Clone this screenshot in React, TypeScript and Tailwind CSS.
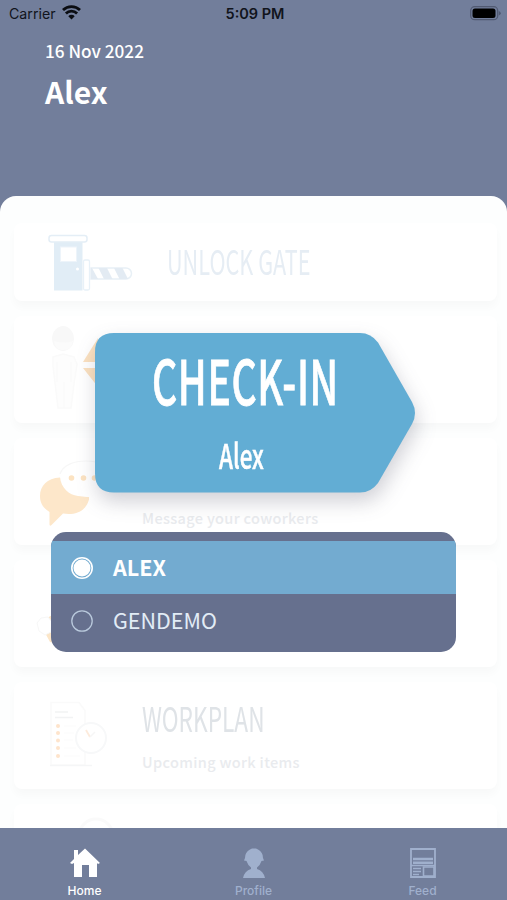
import type { ReactNode } from 'react';
import clsx from 'clsx';

type Card = {
  id: string;
  title?: string;
  subtitle?: string;
  icon: ReactNode;
};

function GateIcon() {
  return (
    <svg width="153" height="78" viewBox="0 0 153 78" fill="none" className="shrink-0">
      <rect x="40" y="17" width="28.5" height="50.5" fill="#e1edf6" />
      <rect x="35" y="12.5" width="38" height="6.5" rx="2.5" fill="#fff" stroke="#e4eef6" strokeWidth="1.5" />
      <rect x="46.500" y="24" width="16" height="14.500" fill="#fff" stroke="#edf4fa" />
      <rect x="69.500" y="37" width="6" height="30" rx="1.500" fill="#fff" stroke="#e8f1f8" strokeWidth="1.300" />
      <circle cx="63.500" cy="46" r="1.500" fill="#fff" />
      <path d="M77 45h35a5 5 0 0 1 0 11H77Z" fill="#fff" stroke="#e8f0f6" strokeWidth="1.500" />
      <path d="M77 45h1l6 11h-7ZM84.500 45H93l5.500 11H90ZM100 45h8.500l5.500 11h-8.500Z" fill="#e3ebf3" />
    </svg>
  );
}

function MentorIcon() {
  return (
    <svg width="128" height="107" viewBox="0 0 128 107" fill="none" className="shrink-0">
      <path d="M38 23c0-8 6-13 11-13 6 0 11 6 11 13l-1 5c-2 4-6 7-10 7s-8-3-10-7Z" fill="#f8f8f8" />
      <path d="M40 25q9 3 19 0-1 9-10 9-8 0-9-9Z" fill="#fbfbfb" />
      <path d="M39 41l10-3 11 3 3 7-3 20-3 24H44l-3-25-2-17Z" stroke="#fafafa" strokeWidth="1.500" fill="#fdfdfd" />
      <path d="M50 66v26M43 46v20M57 46v20" stroke="#fafafa" strokeWidth="1.500" />
      <path d="M84 22v24H69ZM69 52h15v19Z" fill="#fbe1c0" />
    </svg>
  );
}

function ChatIcon() {
  return (
    <svg width="128" height="107" viewBox="0 0 128 107" fill="none" className="shrink-0">
      <path
        d="M46 39.500C33 40 26 48 26 58c0 7 3 12 9.500 16v12c0 2 1 2 2 1L49 75.500c12 2 23-2 26-14V55L50 40Z"
        fill="#fde7ca"
      />
      <path d="M46 39c0-10 12-16 26-16 15 0 25 8 25 18S87 59 73 59l-9-1c-9-1-17-8-18-19Z" fill="#fff" />
      <path d="M46 36c3-9 14-13 26-13 6 0 12 1 16 4" stroke="#f7f7f7" strokeWidth="1.200" />
      <g fill="#fce3c2">
        <circle cx="57.500" cy="40" r="2.800" />
        <circle cx="69.500" cy="40" r="2.800" />
        <circle cx="80.500" cy="40" r="2.800" />
      </g>
    </svg>
  );
}

function TeamIcon() {
  return (
    <svg width="128" height="107" viewBox="0 0 128 107" fill="none" className="shrink-0">
      <path d="M40 54l-7 4v6l7 2ZM30 71l7 1 3 3v8l-4-1Z" fill="#fce6c8" />
      <path d="M34 57l-7 1-4 5 2 8 6 4 6-3 1-10Z" fill="#fff" stroke="#f7f7f7" />
    </svg>
  );
}

function WorkplanIcon() {
  return (
    <svg width="128" height="107" viewBox="0 0 128 107" fill="none" className="shrink-0">
      <path d="M37 20.500h28l6 8V83H37Z" stroke="#fafafa" strokeWidth="1.500" />
      <path d="M41 30h13M41 35.500h18" stroke="#f2f3f4" strokeWidth="1.500" />
      <path d="M50 44h12M50 51h10M50 58h9M50 66h12M50 74h16" stroke="#fbfbfb" />
      <path d="M36 83.500h42" stroke="#f5f6f7" strokeWidth="1.500" />
      <g fill="#fee4cc">
        <circle cx="44" cy="44" r="2" />
        <circle cx="44" cy="51" r="2" />
        <circle cx="44" cy="58.500" r="2" />
        <circle cx="44" cy="66" r="2" />
        <circle cx="44" cy="74" r="2" />
      </g>
      <circle cx="77" cy="56" r="15" fill="#fff" stroke="#f7f8f9" strokeWidth="2" />
      <path d="M72 48l4 7" stroke="#fdebdc" strokeWidth="1.800" />
      <path d="M76 55l5-5" stroke="#f6f6f6" strokeWidth="1.500" />
    </svg>
  );
}

function NextIcon() {
  return (
    <svg width="128" height="107" viewBox="0 0 128 107" fill="none" className="shrink-0">
      <circle cx="82" cy="32" r="17" stroke="#fafafa" strokeWidth="3" />
    </svg>
  );
}

const cards: Card[] = [
  { id: 'mentor', icon: <MentorIcon /> },
  { id: 'chat', subtitle: 'Message your coworkers', icon: <ChatIcon /> },
  { id: 'team', icon: <TeamIcon /> },
  { id: 'workplan', title: 'WORKPLAN', subtitle: 'Upcoming work items', icon: <WorkplanIcon /> },
  { id: 'next', icon: <NextIcon /> },
];

const sites = [
  { name: 'ALEX', selected: true },
  { name: 'GENDEMO', selected: false },
];

function StatusBar() {
  return (
    <div className="flex h-7 items-center pl-[9px] pr-1.5 font-['Inter',sans-serif] text-sm text-[#11141c]">
      <div className="flex flex-1 items-center gap-1.5">
        <span className="text-[14.200px]">Carrier</span>
        <svg width="19" height="15" viewBox="0 0 19 15" className="-mt-1" fill="#0b0d12">
          <path d="M9.500 14.500 6.300 11.200a4.500 4.500 0 0 1 6.400 0Z" />
          <path d="M3.900 8.500a8 8 0 0 1 11.200 0" fill="none" stroke="#0b0d12" strokeWidth="2.800" />
          <path d="M1 5a12.200 12.200 0 0 1 17 0" fill="none" stroke="#0b0d12" strokeWidth="2.800" />
        </svg>
      </div>
      <span className="text-[14.500px] font-semibold">5:09 PM</span>
      <div className="flex flex-1 items-center justify-end">
        <svg width="31" height="15" viewBox="0 0 31 15" className="-mt-0.5">
          <rect x="0.700" y="0.700" width="27" height="13" rx="4" fill="none" stroke="#515a72" strokeWidth="1.300" />
          <rect x="2.500" y="2.500" width="23" height="9.500" rx="2.500" fill="#000" />
          <path d="M28.800 5v4.500q2-.8 2-2.200T28.800 5" fill="#515a72" />
        </svg>
      </div>
    </div>
  );
}

function ActionCard({ card }: { card: Card }) {
  return (
    <div className="flex h-[107px] shrink-0 rounded-lg bg-white shadow-[0_6px_8px_rgba(0,0,0,0.025)]">
      {card.icon}
      <div className="flex flex-col whitespace-nowrap">
        <div className="flex h-[68px] items-center pt-[3px]">
          <span className="origin-left scale-x-[0.667] text-[34px] font-normal leading-10 text-[#dfe3e7]">
            {card.title}
          </span>
        </div>
        <span className="text-[14.500px] font-medium leading-6 tracking-[0.350px] text-[#e9ebee]">{card.subtitle}</span>
      </div>
    </div>
  );
}

function CheckInButton() {
  return (
    <div className="relative h-[160px] w-[320px]">
      <svg
        width="320"
        height="160"
        viewBox="0 0 320 160"
        className="absolute inset-0 overflow-visible drop-shadow-[2px_9px_10px_rgba(60,60,85,0.240)]"
      >
        <path
          d="M19 0H265Q276 0 283 9.500L317 69Q323 80 317 91L283 150Q276 159.500 265 159.500H19Q0 159.500 0 140.500V19Q0 0 19 0Z"
          fill="#62add4"
        />
      </svg>
      <div className="relative flex flex-col items-start whitespace-nowrap text-white">
        <span className="ml-[57px] mt-[4px] h-[93px] origin-left scale-x-[0.640] text-[61px] font-medium leading-[84px] tracking-[1px] [-webkit-text-stroke:0.800px_white]">
          CHECK-IN
        </span>
        <span className="ml-[124px] origin-left scale-x-[0.660] text-[34px] font-medium leading-[50px] [-webkit-text-stroke:0.500px_white]">
          Alex
        </span>
      </div>
    </div>
  );
}

function SitePicker() {
  return (
    <div className="flex h-[120px] w-[405px] flex-col overflow-hidden rounded-[15px] bg-[#66708e] pt-[9px]">
      {sites.map((site) => (
        <div
          key={site.name}
          className={clsx('flex h-[53px] items-center gap-5 pl-5', site.selected && 'bg-[#73abd0]')}
        >
          <svg width="22" height="22" viewBox="0 0 22 22" fill="none">
            <circle
              cx="11"
              cy="11"
              r="10.200"
              stroke={site.selected ? '#fff' : '#b9c9dc'}
              strokeWidth={site.selected ? 1.6 : 1.3}
            />
            {site.selected && <circle cx="11" cy="11" r="8.500" fill="#fff" />}
          </svg>
          <span
            className={clsx(
              '-mt-px text-[21.500px] leading-8',
              site.selected ? 'font-bold text-white' : 'font-normal text-[#e2ecf6]',
            )}
          >
            {site.name}
          </span>
        </div>
      ))}
    </div>
  );
}

function TabBar() {
  return (
    <nav className="grid h-[72px] shrink-0 grid-cols-3 bg-[#727e9b] font-['Inter',sans-serif] text-[12px] font-medium leading-4">
      <div className="flex flex-col items-center pt-[19px] text-white">
        <svg width="30" height="32" viewBox="0 0 30 32" fill="currentColor">
          <path d="M4 3h4v5l7-6.500L30 16l-2 1-1-1v14h-8V18h-7v12H4V16l-2 1-2-1 4-4Z" />
        </svg>
        <span className="mt-[4px]">Home</span>
      </div>
      <div className="flex flex-col items-center pt-[19px] text-[#a0b0cd]">
        <svg width="24" height="32" viewBox="0 0 24 32" fill="currentColor">
          <path d="M3 11q0-6 5-8.500l2-1h4l2 1q5 2.500 5 8.500l1 2.500-2.500.5q-1.500 4.500-4.500 6.500v1.500q6.500 2 8 9H1q1.500-7 8-9v-1.500q-3-2-4.500-6.500L2 13.500Z" />
        </svg>
        <span className="mt-[4px]">Profile</span>
      </div>
      <div className="flex flex-col items-center pt-[19px] text-[#a0b0cd]">
        <svg width="26" height="32" viewBox="0 0 26 32" fill="none" stroke="currentColor" strokeWidth="1.800">
          <path d="M1 2h24v28H1Z" />
          <path d="M3 12h20M3 15.800h20" strokeWidth="2.400" />
          <path d="M1 18.500h24M3 21.500h8M3 24.500h8M3 27.500h6" strokeWidth="1.400" />
          <path d="M13.500 20h10.500v9H13.500Z" strokeWidth="1.600" />
        </svg>
        <span className="mt-[4px]">Feed</span>
      </div>
    </nav>
  );
}

export default function App() {
  return (
    <div className="relative flex h-[900px] w-[507px] flex-col overflow-hidden bg-[#727e9b] font-['Noto_Sans_CJK_SC',sans-serif]">
      <header className="h-[196px] shrink-0 text-white">
        <StatusBar />
        <div className="flex flex-col pl-[45px] pt-[9px]">
          <span className="text-[17.200px] font-medium leading-7">16 Nov 2022</span>
          <span className="mt-1.5 text-[30px] font-bold leading-10">Alex</span>
        </div>
      </header>

      <main className="flex min-h-0 flex-1 flex-col gap-[15px] overflow-hidden rounded-t-2xl bg-[#fdfefe] pl-3.5 pr-2.5 pt-[27px]">
        <div className="flex h-[78px] shrink-0 items-center rounded-lg bg-white shadow-[0_6px_8px_rgba(0,0,0,0.025)]">
          <GateIcon />
          <span className="-mt-1 origin-left scale-x-[0.637] whitespace-nowrap text-[34px] font-normal text-[#e6edf4]">
            UNLOCK GATE
          </span>
        </div>
        {cards.map((card) => (
          <ActionCard key={card.id} card={card} />
        ))}
      </main>

      <TabBar />

      <div className="absolute left-[51px] top-[333px] flex w-[405px] flex-col items-center gap-[39px]">
        <div className="flex w-full pl-11">
          <CheckInButton />
        </div>
        <SitePicker />
      </div>
    </div>
  );
}
